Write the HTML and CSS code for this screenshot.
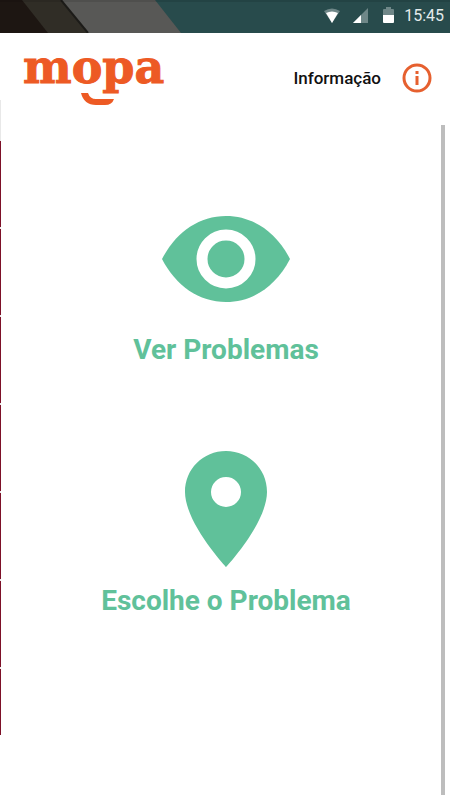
FILE: index.html
```html
<!DOCTYPE html>
<html lang="pt">
<head>
<meta charset="utf-8">
<meta name="viewport" content="width=device-width, initial-scale=1">
<title>mopa</title>
<link rel="stylesheet" href="styles.css">
</head>
<body>
<div class="status">
  <svg class="wallpaper" viewBox="0 0 450 33" preserveAspectRatio="xMinYMin slice" aria-hidden="true">
    <path fill="#284b4c" d="M0 0h450v33H0z"/>
    <path fill="#585856" d="M0 0h155l26 33H0z"/>
    <path fill="#302d26" d="M0 0h61l27 33H0z"/>
    <path fill="none" stroke="#1c1b18" stroke-width="2" d="M61 0l27 33"/>
    <path fill="#1d1612" d="M0 0h22l26 33H0z"/>
    <path fill="#000" opacity=".1" d="M0 0h450v2H0z"/>
  </svg>
  <div class="signals">
    <svg width="18" height="16" viewBox="0 0 18 16" aria-hidden="true">
      <path fill="#6f8788" d="M1 3Q9-2 17 3L9 15z"/>
      <path fill="#fff" d="M3 5Q9 2 15 5L9 15z"/>
    </svg>
    <svg width="16" height="16" viewBox="0 0 16 16" aria-hidden="true">
      <path fill="#6f8788" d="M0 15L15 0v15z"/>
      <path fill="#fff" d="M0 15l8-8v8z"/>
    </svg>
    <svg width="12" height="17" viewBox="0 0 12 17" aria-hidden="true">
      <path fill="#6f8788" d="M0 8V3q0-1 1-1h2V0h5v2h2q1 0 1 1v5z"/>
      <path fill="#fff" d="M0 8h11v7q0 1-1 1H1q-1 0-1-1z"/>
    </svg>
    <time class="clock">15:45</time>
  </div>
</div>
<header class="header">
  <a class="logo" href="#">mopa
    <svg class="smile" width="34" height="14" viewBox="0 0 34 14" aria-hidden="true">
      <path fill="#ed5a24" d="M0 1h7Q9 7 15 7h18q-2 6-9 6H15Q3 13 0 1z"/>
    </svg>
  </a>
  <button class="info" type="button">
    <span>Informação</span>
    <svg width="30" height="30" viewBox="0 0 30 30" aria-hidden="true">
      <circle cx="15" cy="15" r="13" fill="none" stroke="#e6602f" stroke-width="3"/>
      <path fill="#e6602f" d="M13.500 8h3v3h-3zM13.500 13h3v9h-3z"/>
    </svg>
  </button>
</header>
<div class="content">
  <main class="actions">
    <button class="action" type="button">
      <svg width="130" height="88" viewBox="0 0 130 88" aria-hidden="true">
        <path fill="#60c19a" d="M1 44C15 17 38 1 65 1s50 16 64 43c-14 27-37 43-64 43S15 71 1 44z"/>
        <circle cx="65" cy="44" r="24" fill="#60c19a" stroke="#fff" stroke-width="11"/>
      </svg>
      <span>Ver Problemas</span>
    </button>
    <button class="action" type="button">
      <svg width="84" height="118" viewBox="0 0 84 118" aria-hidden="true">
        <path fill="#60c19a" fill-rule="evenodd" d="M42 1C19 1 1 19 1 42c0 31 41 75 41 75s41-44 41-75C83 19 65 1 42 1zm0 26a15 15 0 1 1 0 30 15 15 0 0 1 0-30z"/>
      </svg>
      <span>Escolhe o Problema</span>
    </button>
  </main>
  <div class="scrollbar"></div>
</div>
<div class="edge" aria-hidden="true"><i></i><i></i><i></i><i></i><i></i><i></i><i></i></div>
</body>
</html>
```
FILE: styles.css
```css
* { box-sizing: border-box; }

body {
  margin: 0;
  min-height: 100vh;
  display: flex;
  flex-direction: column;
  position: relative;
  background: #fff;
  font-family: Roboto, "Liberation Sans", sans-serif;
}

button {
  border: 0;
  padding: 0;
  background: none;
  font: inherit;
  color: inherit;
  cursor: pointer;
}

svg { display: block; flex: none; }

.status {
  position: relative;
  height: 33px;
  background: #284b4c;
}

.wallpaper {
  position: absolute;
  inset: 0;
  width: 100%;
  height: 100%;
}

.signals {
  position: relative;
  height: 100%;
  display: flex;
  align-items: center;
  justify-content: flex-end;
  gap: 12px;
  padding: 0 6px 2px 0;
}

.signals svg + svg + svg { margin-left: 2px; }

.clock {
  margin-left: -3px;
  color: #e3eaea;
  font-size: 16px;
  line-height: 20px;
}

.header {
  height: 92px;
  display: flex;
  align-items: flex-start;
  justify-content: space-between;
  padding: 8px 18px 0 23px;
}

.logo {
  position: relative;
  color: #ed5a24;
  font-family: "DejaVu Serif", serif;
  font-size: 46px;
  font-weight: 700;
  line-height: 52px;
  text-decoration: none;
  -webkit-text-stroke: 1px #ed5a24;
}

.smile {
  position: absolute;
  left: 58px;
  top: 51px;
}

.info {
  display: flex;
  align-items: center;
  gap: 21px;
  margin-top: 22px;
  color: #111;
  font-size: 17px;
  font-weight: 500;
  line-height: 20px;
}

.content {
  flex: 1;
  display: flex;
  padding: 0 5px 5px 0;
}

.actions {
  flex: 1;
  display: flex;
  flex-direction: column;
  align-items: center;
  gap: 82px;
  padding: 90px 0 0 11px;
}

.action {
  display: flex;
  flex-direction: column;
  align-items: center;
  gap: 15px;
  color: #60c19a;
  font-size: 28px;
  font-weight: 700;
  line-height: 36px;
}

.action:first-child { gap: 29px; }

.scrollbar {
  width: 4px;
  background: #bdbdbd;
}

.edge {
  position: absolute;
  left: 0;
  top: 100px;
  width: 1px;
  height: 635px;
  padding-top: 41px;
  display: flex;
  flex-direction: column;
  gap: 2px;
  background: #e8e8e8;
}

.edge i {
  flex: 0 0 86px;
  background: #7d1128;
}

.edge i:last-child { flex: 1; }
```
